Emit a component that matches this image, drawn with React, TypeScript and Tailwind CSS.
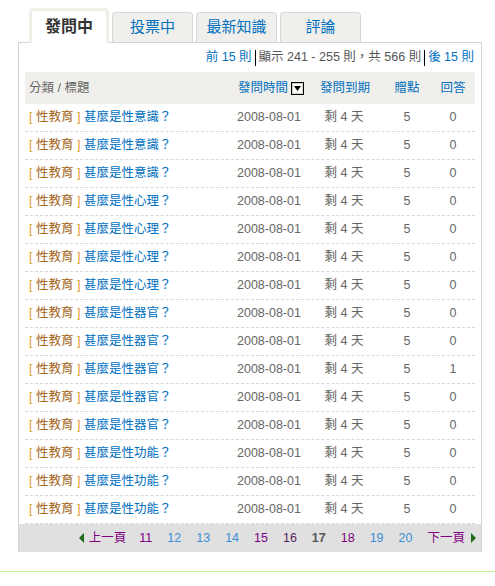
import React from "react";

const font = { fontFamily: '"Liberation Sans", Arial, "Noto Sans CJK TC", sans-serif' };

const titles = [
  "甚麼是性意識？",
  "甚麼是性意識？",
  "甚麼是性意識？",
  "甚麼是性心理？",
  "甚麼是性心理？",
  "甚麼是性心理？",
  "甚麼是性心理？",
  "甚麼是性器官？",
  "甚麼是性器官？",
  "甚麼是性器官？",
  "甚麼是性器官？",
  "甚麼是性器官？",
  "甚麼是性功能？",
  "甚麼是性功能？",
  "甚麼是性功能？",
];

const pages = [
  { n: "11", c: "text-[#800080]" },
  { n: "12", c: "text-[#3b8fd6]" },
  { n: "13", c: "text-[#3b8fd6]" },
  { n: "14", c: "text-[#3b8fd6]" },
  { n: "15", c: "text-[#800080]" },
  { n: "16", c: "text-[#5c1f5c]" },
  { n: "17", c: "text-[#555] font-bold" },
  { n: "18", c: "text-[#800080]" },
  { n: "19", c: "text-[#3b8fd6]" },
  { n: "20", c: "text-[#3b8fd6]" },
];

const cols = "grid grid-cols-[208px_82px_62px_60px_32px] items-center";

const App = () => {
  return (
    <div className="w-[495px] h-[586px] bg-white text-[12.5px] text-[#666]" style={font}>
      <div className="flex items-end gap-[3px] pl-[29px] pt-[8px] relative z-10">
        <div className="w-[80px] h-[35px] bg-white border-[3px] border-b-0 border-[#efeee9] rounded-t-[4px] flex items-center justify-center text-[16px] font-bold text-[#333] -mb-px">
          發問中
        </div>
        {["投票中", "最新知識", "評論"].map((t) => (
          <div
            key={t}
            className="w-[81px] h-[30px] bg-[#f0efeb] border border-b-0 border-[#d8d8d8] rounded-t-[4px] flex items-center justify-center text-[15px] text-[#0070c0]"
          >
            {t}
          </div>
        ))}
      </div>

      <div className="ml-[18px] w-[464px] border border-b-0 border-[#d4d4d4]">
        <div className="px-[6px]">
          <div className="h-[29px] flex items-center justify-end pr-[1px]">
            <span className="text-[#0070c0]">前 15 則</span>
            <span className="mx-[3px] w-px h-[16px] bg-black" />
            <span className="text-[#555]">顯示 241 - 255 則，共 566 則</span>
            <span className="mx-[3px] w-px h-[16px] bg-black" />
            <span className="text-[#0070c0]">後 15 則</span>
          </div>

          <div className={`${cols} h-[32px] bg-[#f0efeb]`}>
            <div className="pl-[4px] text-[#666]">分類 / 標題</div>
            <div className="pl-[5px] flex items-center text-[#0070c0]">
              發問時間
              <span className="ml-[3px] w-[13px] h-[13px] border border-black bg-[#d4d0c8] flex items-center justify-center">
                <svg width="9" height="9" viewBox="0 0 9 9">
                  <rect x="0" y="0" width="9" height="9" fill="#fff" />
                  <path d="M1 2 H8 L4.5 7 Z" fill="#000" />
                </svg>
              </span>
            </div>
            <div className="text-center text-[#0070c0] pr-[2px]">發問到期</div>
            <div className="text-center text-[#0070c0]">贈點</div>
            <div className="text-center text-[#0070c0]">回答</div>
          </div>

          {titles.map((t, i) => (
            <div key={i} className={`${cols} h-[28px] border-b border-dashed border-[#d8d8d8]`}>
              <div className="pl-[4px] whitespace-nowrap">
                <span className="text-[#e39a2a]">[ </span>
                <span className="text-[#a5661a]">性教育</span>
                <span className="text-[#e39a2a]"> ]</span>
                <span className="text-[#0070c0]"> {t}</span>
              </div>
              <div className="pl-[4px]">2008-08-01</div>
              <div className="text-center pr-[4px]">剩 4 天</div>
              <div className="text-center">5</div>
              <div className="text-center">{i === 9 ? "1" : "0"}</div>
            </div>
          ))}
        </div>

        <div className="h-[28px] bg-[#e0e0e0] flex items-center justify-end pr-[5px]">
          <span className="flex items-center mr-[13px]">
            <span className="w-0 h-0 border-y-[5px] border-y-transparent border-r-[5px] border-r-[#1e6b1e] mr-[5px]" />
            <span className="text-[#800080]">上一頁</span>
          </span>
          <div className="flex gap-[15px] mr-[15px]">
            {pages.map((p) => (
              <span key={p.n} className={p.c}>
                {p.n}
              </span>
            ))}
          </div>
          <span className="flex items-center">
            <span className="text-[#800080]">下一頁</span>
            <span className="w-0 h-0 border-y-[5px] border-y-transparent border-l-[5px] border-l-[#1e6b1e] ml-[6px]" />
          </span>
        </div>
      </div>

      <div className="mt-[19px] h-px bg-[#c8f59a]" />
    </div>
  );
};

export default App;
